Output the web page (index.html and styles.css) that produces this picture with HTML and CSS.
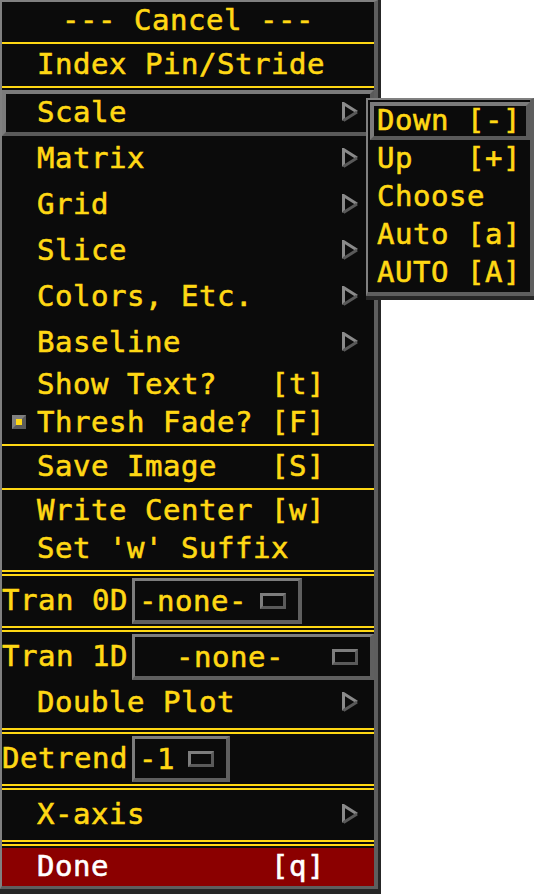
FILE: index.html
```html
<!DOCTYPE html>
<html>
<head>
<meta charset="utf-8">
<link rel="stylesheet" href="styles.css">
</head>
<body>
<div class="shell">
  <div class="menu">
    <div class="item center">--- Cancel ---</div>
    <div class="sep"></div>
    <div class="item">Index Pin/Stride</div>
    <div class="sep"></div>
    <div class="item tall armed">Scale<svg class="arrow" viewBox="0 0 16 20"><path d="M1.5 18.5V1.5L15 10" fill="none" stroke="#8a8a8a" stroke-width="3"/><path d="M15 10L1.5 18.5" fill="none" stroke="#595959" stroke-width="3"/></svg></div>
    <div class="item tall">Matrix<svg class="arrow" viewBox="0 0 16 20"><path d="M1.5 18.5V1.5L15 10" fill="none" stroke="#8a8a8a" stroke-width="3"/><path d="M15 10L1.5 18.5" fill="none" stroke="#595959" stroke-width="3"/></svg></div>
    <div class="item tall">Grid<svg class="arrow" viewBox="0 0 16 20"><path d="M1.5 18.5V1.5L15 10" fill="none" stroke="#8a8a8a" stroke-width="3"/><path d="M15 10L1.5 18.5" fill="none" stroke="#595959" stroke-width="3"/></svg></div>
    <div class="item tall">Slice<svg class="arrow" viewBox="0 0 16 20"><path d="M1.5 18.5V1.5L15 10" fill="none" stroke="#8a8a8a" stroke-width="3"/><path d="M15 10L1.5 18.5" fill="none" stroke="#595959" stroke-width="3"/></svg></div>
    <div class="item tall">Colors, Etc.<svg class="arrow" viewBox="0 0 16 20"><path d="M1.5 18.5V1.5L15 10" fill="none" stroke="#8a8a8a" stroke-width="3"/><path d="M15 10L1.5 18.5" fill="none" stroke="#595959" stroke-width="3"/></svg></div>
    <div class="item tall">Baseline<svg class="arrow" viewBox="0 0 16 20"><path d="M1.5 18.5V1.5L15 10" fill="none" stroke="#8a8a8a" stroke-width="3"/><path d="M15 10L1.5 18.5" fill="none" stroke="#595959" stroke-width="3"/></svg></div>
    <div class="item">Show Text?   [t]</div>
    <div class="item toggle"><span class="ind"></span>Thresh Fade? [F]</div>
    <div class="sep"></div>
    <div class="item">Save Image   [S]</div>
    <div class="sep"></div>
    <div class="item">Write Center [w]</div>
    <div class="item">Set 'w' Suffix</div>
    <div class="sep2"></div>
    <div class="opt-row">
      <span class="label">Tran 0D</span>
      <div class="opt"><span>-none-</span><span class="opt-ind"></span></div>
    </div>
    <div class="sep2"></div>
    <div class="opt-row">
      <span class="label">Tran 1D</span>
      <div class="opt wide"><span>-none-</span><span class="opt-ind"></span></div>
    </div>
    <div class="item tall">Double Plot<svg class="arrow" viewBox="0 0 16 20"><path d="M1.5 18.5V1.5L15 10" fill="none" stroke="#8a8a8a" stroke-width="3"/><path d="M15 10L1.5 18.5" fill="none" stroke="#595959" stroke-width="3"/></svg></div>
    <div class="sep2"></div>
    <div class="opt-row">
      <span class="label">Detrend</span>
      <div class="opt"><span>-1</span><span class="opt-ind"></span></div>
    </div>
    <div class="sep2"></div>
    <div class="item tall">X-axis<svg class="arrow" viewBox="0 0 16 20"><path d="M1.5 18.5V1.5L15 10" fill="none" stroke="#8a8a8a" stroke-width="3"/><path d="M15 10L1.5 18.5" fill="none" stroke="#595959" stroke-width="3"/></svg></div>
    <div class="sep2"></div>
    <div class="item done">Done         [q]</div>
  </div>
</div>
<div class="sub-wrap">
  <div class="sub">
    <div class="sitem armed">Down [-]</div>
    <div class="sitem">Up   [+]</div>
    <div class="sitem">Choose</div>
    <div class="sitem">Auto [a]</div>
    <div class="sitem">AUTO [A]</div>
  </div>
</div>
</body>
</html>
```
FILE: styles.css
```css
html, body {
  margin: 0;
  padding: 0;
  overflow: hidden;
}
body {
  background: #ffffff;
  font-family: "DejaVu Sans Mono", "Liberation Mono", monospace;
  font-size: 29px;
  letter-spacing: 0.54px;
  color: #ffd814;
  -webkit-text-stroke: 0.6px currentColor;
}
.shell {
  width: max-content;
  background: #262626;
  padding: 0 3px 5px 0;
}
.menu {
  width: 372px;
  background: #0b0b0b;
  border-style: solid;
  border-width: 2px 4px 3px 2px;
  border-color: #808080 #5e5e5e #5e5e5e #808080;
}
.item {
  display: flex;
  align-items: center;
  box-sizing: border-box;
  height: 38px;
  padding: 0 0 3px 35px;
  white-space: pre;
}
.item.tall {
  height: 46px;
}
.item.center {
  justify-content: center;
  padding-left: 0;
}
.item.armed {
  border-style: solid;
  border-width: 4px;
  border-color: #7b7b7b #5a5a5a #5a5a5a #7b7b7b;
  padding-left: 31px;
}
.arrow {
  margin-left: auto;
  margin-right: 16px;
  width: 16px;
  height: 20px;
  flex: none;
}
.armed .arrow {
  margin-right: 12px;
}
.item.toggle {
  padding-left: 10px;
}
.ind {
  width: 14px;
  height: 14px;
  box-sizing: border-box;
  border-style: solid;
  border-width: 4px;
  border-color: #808080 #5a5a5a #5a5a5a #808080;
  background: #ffd814;
  margin-right: 11px;
  flex: none;
}
.sep {
  height: 2px;
  margin: 2px 0;
  background: #ffd814;
}
.sep2 {
  height: 2px;
  margin: 2px 0;
  border-top: 2px solid #ffd814;
  border-bottom: 2px solid #ffd814;
}
.opt-row {
  display: flex;
  height: 46px;
  white-space: pre;
}
.label {
  display: flex;
  align-items: center;
  padding-bottom: 2px;
  margin-right: 4px;
}
.opt {
  display: flex;
  align-items: center;
  box-sizing: border-box;
  border-style: solid;
  border-width: 3px 4px 4px 3px;
  border-color: #7d7d7d #5f5f5f #5f5f5f #7d7d7d;
  padding: 0 12px 0 4px;
}
.opt.wide {
  flex: 1;
  padding-left: 41px;
}
.opt-ind {
  width: 26px;
  height: 16px;
  box-sizing: border-box;
  border-style: solid;
  border-width: 3px;
  border-color: #7d7d7d #5a5a5a #5a5a5a #7d7d7d;
  margin-left: 13px;
  flex: none;
}
.opt.wide .opt-ind {
  margin-left: auto;
}
.done {
  background: #8b0000;
  color: #ffffff;
}
.sub-wrap {
  position: absolute;
  left: 366px;
  top: 98px;
  background: #262626;
  padding-bottom: 4px;
}
.sub {
  width: 160px;
  background: #0b0b0b;
  border-style: solid;
  border-width: 2px 4px 4px 2px;
  border-color: #808080 #5e5e5e #5e5e5e #808080;
  padding: 2px 0 0 2px;
}
.sitem {
  display: flex;
  align-items: center;
  box-sizing: border-box;
  height: 38px;
  padding: 0 0 2px 7px;
  white-space: pre;
}
.sitem.armed {
  border-style: solid;
  border-width: 4px;
  border-color: #7b7b7b #5a5a5a #5a5a5a #7b7b7b;
  padding-left: 3px;
}
```
